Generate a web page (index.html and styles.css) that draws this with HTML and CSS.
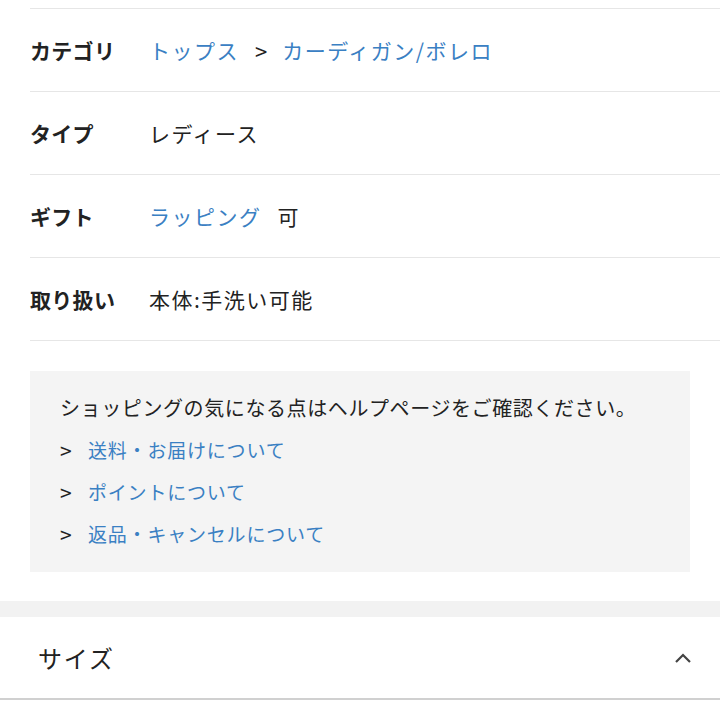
FILE: index.html
```html
<!DOCTYPE html>
<html lang="ja">
<head>
<meta charset="utf-8">
<link rel="stylesheet" href="styles.css">
</head>
<body>
<div class="spec">
  <div class="row">
    <div class="label">カテゴリ</div>
    <div class="value"><a class="link">トップス</a><span class="sep">&gt;</span><a class="link">カーディガン/ボレロ</a></div>
  </div>
  <div class="row">
    <div class="label">タイプ</div>
    <div class="value">レディース</div>
  </div>
  <div class="row">
    <div class="label">ギフト</div>
    <div class="value"><a class="link">ラッピング</a><span class="after">可</span></div>
  </div>
  <div class="row">
    <div class="label">取り扱い</div>
    <div class="value">本体:手洗い可能</div>
  </div>
</div>
<div class="help">
  <p class="help-title">ショッピングの気になる点はヘルプページをご確認ください。</p>
  <div class="help-item"><span class="arrow">&gt;</span><a class="link">送料・お届けについて</a></div>
  <div class="help-item"><span class="arrow">&gt;</span><a class="link">ポイントについて</a></div>
  <div class="help-item"><span class="arrow">&gt;</span><a class="link">返品・キャンセルについて</a></div>
</div>
<div class="band"></div>
<div class="section-head">
  <span class="section-title">サイズ</span>
  <svg class="chev" width="18" height="12" viewBox="0 0 18 12"><path d="M2 10 L9 3 L16 10" fill="none" stroke="#444" stroke-width="2.2"/></svg>
</div>
</body>
</html>
```
FILE: styles.css
```css
html, body {
  margin: 0;
  padding: 0;
  background: #fff;
  font-family: "Noto Sans CJK JP", "Noto Sans", sans-serif;
  color: #222;
}
.spec {
  padding-top: 8px;
  padding-left: 30px;
}
.row {
  display: flex;
  align-items: center;
  height: 82px;
  border-top: 1px solid #e6e6e6;
}
.row:last-child {
  border-bottom: 1px solid #e6e6e6;
}
.label {
  width: 119px;
  font-size: 21px;
  font-weight: 700;
  letter-spacing: 0.3px;
}
.value {
  font-size: 21px;
  letter-spacing: 1.5px;
  display: flex;
  align-items: center;
}
.link {
  color: #3a80c3;
}
.sep {
  margin: 0 15px 0 16px;
  font-size: 22px;
  letter-spacing: 0;
}
.after {
  margin-left: 16px;
}
.help {
  margin: 30px 30px 0 30px;
  background: #f4f4f4;
  padding: 16px 30px 17px 30px;
}
.help-title {
  margin: 0;
  font-size: 20px;
  line-height: 42px;
  letter-spacing: 0.6px;
}
.help-item {
  display: flex;
  align-items: center;
  font-size: 19px;
  line-height: 42px;
  letter-spacing: 0.8px;
}
.arrow {
  width: 28px;
  font-size: 21px;
  letter-spacing: 0;
}
.band {
  margin-top: 29px;
  height: 16px;
  background: #f2f2f2;
}
.section-head {
  display: flex;
  align-items: center;
  justify-content: space-between;
  height: 81px;
  padding: 0 28px 0 38px;
  border-bottom: 2px solid #d0d0d0;
}
.section-title {
  font-size: 24px;
  letter-spacing: 1.8px;
  color: #222;
}
.chev {
  display: block;
}
```
